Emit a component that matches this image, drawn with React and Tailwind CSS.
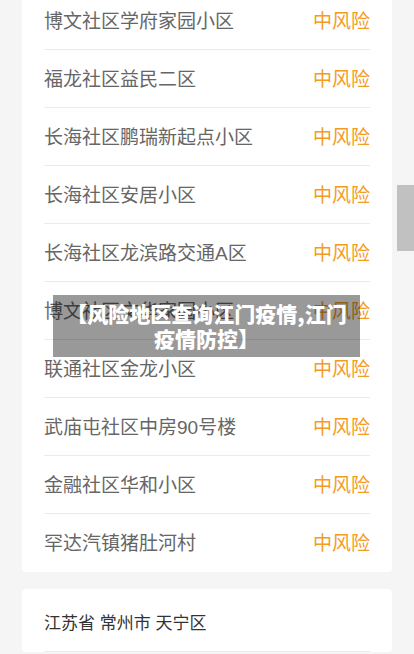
import React from "react";

const rows = [
  "博文社区学府家园小区",
  "福龙社区益民二区",
  "长海社区鹏瑞新起点小区",
  "长海社区安居小区",
  "长海社区龙滨路交通A区",
  "博文社区文华家园小区",
  "联通社区金龙小区",
  "武庙屯社区中房90号楼",
  "金融社区华和小区",
  "罕达汽镇猪肚河村",
];

export default function App() {
  return (
    <div
      className="relative w-[414px] h-[654px] overflow-hidden bg-[#f5f5f5]"
      style={{ fontFamily: '"Liberation Sans", "Noto Sans CJK SC", sans-serif' }}
    >
      <div className="mx-[22px] -mt-[8px] bg-white rounded-[4px] px-[22px]">
        {rows.map((r, i) => (
          <div
            key={i}
            className={
              "flex items-center justify-between h-[58px] pt-[3px] " +
              (i < rows.length - 1 ? "border-b border-[#ebebeb]" : "")
            }
          >
            <span className="text-[19px] text-[#666666]">{r}</span>
            <span className="text-[19px] text-[#f49b22]">中风险</span>
          </div>
        ))}
      </div>
      <div className="mx-[22px] mt-[17px] bg-white rounded-[4px] px-[22px] pt-[5px]">
        <div className="flex items-center h-[58px] pt-[2px] border-b border-[#ebebeb]">
          <span className="text-[17px] text-[#333333]">江苏省 常州市 天宁区</span>
        </div>
      </div>

      <div className="absolute left-[53px] top-[295px] w-[307px] h-[62px] bg-black/40 flex items-center justify-center">
        <p
          className="text-white font-black text-[21px] leading-[25px] text-center"
          style={{ fontFamily: '"Noto Sans CJK SC", sans-serif' }}
        >
          【风险地区查询江门疫情,江门
          <br />
          疫情防控】
        </p>
      </div>

      <div className="absolute left-[397px] top-[185px] w-[17px] h-[66px] bg-[#c1c1c1]" />
    </div>
  );
}
